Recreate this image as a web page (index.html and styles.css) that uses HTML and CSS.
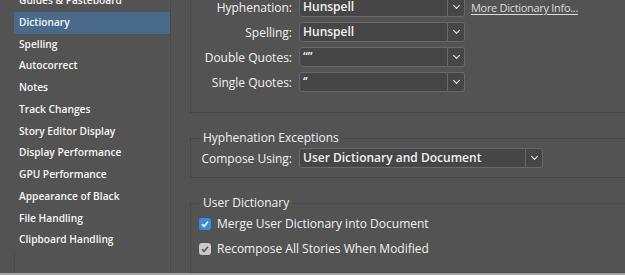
FILE: index.html
```html
<!DOCTYPE html>
<html lang="en">
<head>
    <meta charset="UTF-8">
    <title>Preferences - Dictionary</title>
    <link rel="stylesheet" href="styles.css">
</head>
<body>
<div class="window">
    <ul class="nav">
        <li>Guides &amp; Pasteboard</li>
        <li class="active">Dictionary</li>
        <li>Spelling</li>
        <li>Autocorrect</li>
        <li>Notes</li>
        <li>Track Changes</li>
        <li>Story Editor Display</li>
        <li>Display Performance</li>
        <li>GPU Performance</li>
        <li>Appearance of Black</li>
        <li>File Handling</li>
        <li>Clipboard Handling</li>
    </ul>

    <div class="panel">
        <div class="group group-top">
            <div class="row">
                <span class="label">Hyphenation:</span>
                <div class="select"><span class="value">Hunspell</span><span class="arrow"></span></div>
                <a class="link" href="#">More Dictionary Info...</a>
            </div>
            <div class="row">
                <span class="label">Spelling:</span>
                <div class="select"><span class="value">Hunspell</span><span class="arrow"></span></div>
            </div>
            <div class="row">
                <span class="label">Double Quotes:</span>
                <div class="select"><span class="value">&ldquo;&rdquo;</span><span class="arrow"></span></div>
            </div>
            <div class="row">
                <span class="label">Single Quotes:</span>
                <div class="select"><span class="value">&lsquo;&rsquo;</span><span class="arrow"></span></div>
            </div>
        </div>

        <div class="group group-mid">
            <span class="group-title">Hyphenation Exceptions</span>
            <div class="row compose">
                <span class="label">Compose Using:</span>
                <div class="select wide"><span class="value">User Dictionary and Document</span><span class="arrow"></span></div>
            </div>
        </div>

        <div class="group group-last">
            <span class="group-title">User Dictionary</span>
            <label class="check">
                <span class="box on"><svg width="12" height="12" viewBox="0 0 12 12"><path d="M3 6.2 L5.1 8.3 L9 3.8" fill="none" stroke="#fff" stroke-width="1.6"/></svg></span>
                Merge User Dictionary into Document
            </label>
            <label class="check">
                <span class="box"><svg width="12" height="12" viewBox="0 0 12 12"><path d="M3 6.2 L5.1 8.3 L9 3.8" fill="none" stroke="#555" stroke-width="1.6"/></svg></span>
                Recompose All Stories When Modified
            </label>
        </div>
    </div>
</div>
<div class="bottom-edge"></div>
</body>
</html>
```

FILE: styles.css
```css
html, body {
    margin: 0;
    height: 100%;
    overflow: hidden;
}
body {
    background-color: #535353;
    font-family: "Open Sans", "DejaVu Sans", sans-serif;
    font-size: 12px;
    font-weight: 500;
    color: #f2f2f2;
    display: flex;
    flex-direction: column;
}
.window {
    flex: 1;
    display: flex;
    min-height: 0;
}

/* left list */
.nav {
    list-style: none;
    margin: -10px 0 0 0;
    padding: 0 0 0 14px;
    width: 156px;
    border-right: 1px solid #484848;
    font-size: 10.2px;
    font-weight: 600;
    color: #f6f6f6;
    display: flex;
    flex-direction: column;
}
.nav li {
    height: 21.75px;
    line-height: 21.75px;
    padding-left: 5px;
}
.nav li.active {
    background-color: #4a6a8b;
}
.nav::after {
    content: "";
    flex: 1;
    border-left: 1px solid #4a4a4a;
}

/* right side */
.panel {
    flex: 1;
    padding-left: 19px;
    margin-right: -20px;
    display: flex;
    flex-direction: column;
}
.group {
    border: 1px solid #474747;
    border-right: none;
    display: flex;
    flex-direction: column;
    align-items: flex-start;
}
.group-top {
    border-top: none;
    margin-top: -3px;
    padding-bottom: 20px;
    gap: 5px;
}
.group-mid {
    margin-top: 25px;
    padding: 0 0 9px 8px;
}
.group-last {
    margin-top: 25px;
    padding-left: 8px;
    flex: 1;
}
.group-title {
    background-color: #535353;
    line-height: 14px;
    margin: -8px 0 3px 1px;
    padding: 0 3px;
}
.group-last .group-title {
    margin-bottom: 1px;
}

.row {
    display: flex;
    align-items: center;
    height: 20px;
}
.label {
    width: 101px;
    text-align: right;
    margin-right: 7px;
}
.compose .label {
    width: 93px;
}
.select {
    display: flex;
    height: 20px;
    box-sizing: border-box;
}
.select .value {
    width: 149px;
    box-sizing: border-box;
    border: 1px solid #686868;
    border-radius: 3px 0 0 3px;
    background-color: #464646;
    padding-left: 3px;
    line-height: 18px;
    font-weight: 600;
    overflow: hidden;
    white-space: nowrap;
}
.select.wide .value {
    width: 227px;
}
.select .arrow {
    width: 17px;
    box-sizing: border-box;
    border: 1px solid #686868;
    border-left: none;
    border-radius: 0 3px 3px 0;
    background-color: #464646;
    position: relative;
}
.select .arrow::after {
    content: "";
    position: absolute;
    left: 6px;
    top: 5px;
    width: 4px;
    height: 4px;
    border-right: 1.5px solid #f0f0f0;
    border-bottom: 1.5px solid #f0f0f0;
    transform: rotate(45deg);
}
.link {
    color: #dcdcdc;
    margin-left: 6px;
    font-size: 11px;
    letter-spacing: -0.3px;
    text-decoration: underline;
    text-underline-offset: 2px;
}

.check {
    display: flex;
    align-items: center;
    gap: 6px;
    height: 25px;
}
.box {
    width: 12px;
    height: 12px;
    border-radius: 3px;
    background-color: #c9c9c9;
    display: flex;
}
.box.on {
    background-color: #3f8ad9;
}

.bottom-edge {
    height: 2px;
    background-color: #a3a3a3;
}
```
